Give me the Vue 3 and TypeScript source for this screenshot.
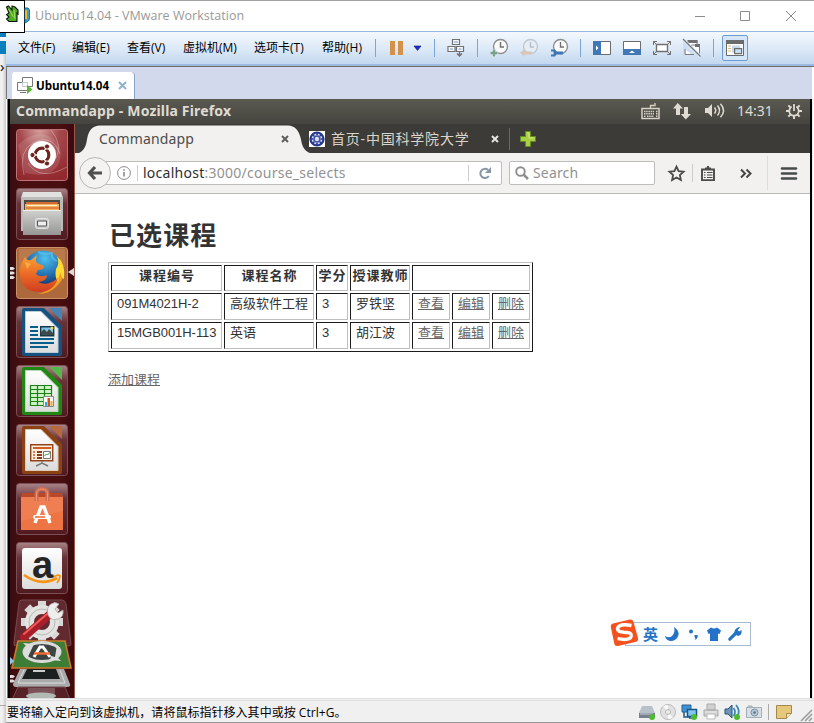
<script setup lang="ts">
interface Course {
  code: string
  name: string
  credit: number
  teacher: string
}

const menus: string[] = ['文件(F)', '编辑(E)', '查看(V)', '虚拟机(M)', '选项卡(T)', '帮助(H)']
const heads: string[] = ['课程编号', '课程名称', '学分', '授课教师']
const actions: string[] = ['查看', '编辑', '删除']
const courses: Course[] = [
  { code: '091M4021H-2', name: '高级软件工程', credit: 3, teacher: '罗铁坚' },
  { code: '15MGB001H-113', name: '英语', credit: 3, teacher: '胡江波' },
]
const teeth: number[] = [0, 45, 90, 135, 180, 225, 270, 315]
</script>

<template>
  <div class="desktop">
    <div class="behind">
      <i class="blue a"></i><i class="blue b"></i><span class="chev">›</span><i class="line"></i>
    </div>
    <div class="window">
      <header class="titlebar">
        <span class="title">Ubuntu14.04 - VMware Workstation</span>
        <svg class="winctl" width="100" height="12" viewBox="0 0 100 12" fill="none" stroke="#8c8c8c">
          <path d="M0 6.500h10M45.500 1.500h9v9h-9zM91 1l10 10M101 1l-10 10" />
        </svg>
      </header>

      <div class="toolbar">
        <nav class="menus"><span v-for="m in menus" :key="m">{{ m }}</span></nav>
        <div class="tools">
          <i class="sep"></i>
          <svg class="pause" width="14" height="14"><path d="M0 0h5v14H0zM8 0h5v14H8z" fill="#d4914a" /></svg>
          <svg class="caret" width="8" height="5"><path d="M0 0h7L3.500 4.500z" fill="#1a2ae0" stroke="#111a66" stroke-width=".6" /></svg>
          <i class="sep"></i>
          <svg width="18" height="20" fill="#f7fafd" stroke="#707070" stroke-width="1.2">
            <path d="M5.500 1.500h7v5h-7zM1 8.500h7v5H1zM9.500 8.500h7v5h-7z" />
            <path d="M7 4h4M3 11h3M11.500 11h3" stroke="#b4cae2" stroke-width="2" />
            <path d="M12.500 14v4M10 15.500l2.500 2.500L15 15.500" fill="none" stroke-width="1.4" />
          </svg>
          <i class="sep"></i>
          <svg width="18" height="20" fill="none">
            <circle cx="10.500" cy="8.500" r="7" fill="#fafafa" stroke="#8c8c8c" stroke-width="1.4" />
            <path d="M10.500 4v5H14" stroke="#707070" stroke-width="1.4" />
            <path d="M4 11v8M0 15h8" stroke="#e0ebf6" stroke-width="4" /><path d="M4 11.500v7M.5 15h7" stroke="#79a08c" stroke-width="2.400" />
          </svg>
          <svg width="18" height="20" fill="none">
            <circle cx="10.500" cy="8.500" r="7" fill="#e6edf5" stroke="#bfc8d1" stroke-width="1.4" />
            <path d="M10.500 4v5H14" stroke="#b5bec8" stroke-width="1.4" />
            <path d="M0 15l4.500-4v2.500H12v3H4.500V19z" fill="#d8c6b8" />
          </svg>
          <svg width="18" height="20" fill="none">
            <circle cx="10.500" cy="8.500" r="7" fill="#fafafa" stroke="#8c8c8c" stroke-width="1.4" />
            <path d="M10.500 4v5H14" stroke="#707070" stroke-width="1.4" />
            <path d="M1 11.500h4l1.500 2H13v3H6.500l-1.500 2H1v-2h2.500v-3H1z" fill="#3f77b2" />
          </svg>
          <i class="sep"></i>
          <svg width="18" height="14"><path d="M.5.500h17v13H.5z" fill="#fff" stroke="#6b6b6b" /><path d="M0 0h8v14H0z" fill="#4177b4" /><path d="M3 4.500L5.500 7 3 9.500z" fill="#fff" /></svg>
          <svg width="18" height="14"><path d="M.5.500h17v13H.5z" fill="#fff" stroke="#6b6b6b" /><path d="M0 8h18v6H0z" fill="#4177b4" /><path d="M6 12h6L9 9.500z" fill="#fff" /></svg>
          <svg width="18" height="14" fill="none" stroke="#707070"><path d="M3.500 3.500h11v7h-11z" fill="#fff" stroke-width="1.4" /><path d="M.5 4V.5H4M.5.5l3 3M14 .5h3.500V4M17.500.5l-3 3M.5 10v3.500H4M.5 13.500l3-3M14 13.500h3.500V10M17.500 13.500l-3-3" /></svg>
          <svg width="18" height="18">
            <path d="M5 1.500h9v8H5z" fill="#fff" stroke="#7c7c7c" /><path d="M4.500 1h10v3h-10z" fill="#707070" />
            <path d="M8.500 6h8v9h-8z" fill="#fff" stroke="#7c7c7c" /><path d="M12 5h5v3h-5z" fill="#707070" />
            <path d="M1.500 8h8v8h-8z" fill="#fff" stroke="#7c7c7c" />
            <path d="M0 1.500L16 18H0z" fill="#cfdff1" /><path d="M2 10v5.500h9" fill="none" stroke="#7c7c7c" /><path d="M3 11v4h5z" fill="#fff" />
            <path d="M0 0l17.500 17.500" stroke="#e9f1f9" stroke-width="3" /><path d="M0 0l17.500 17.500" stroke="#6f7880" stroke-width="1.2" />
          </svg>
          <i class="sep"></i>
          <span class="pressed">
            <svg width="18" height="16"><path d="M.5.500h17v15H.5z" fill="#fff" stroke="#6b6b6b" /><path d="M0 0h18v4H0z" fill="#6b6b6b" /><path d="M2 6h3M2 8.500h3M2 11h3" stroke="#e0bb72" stroke-width="1.2" /><path d="M6 5.500h8v7H6z" fill="#c4d8ec" /><path d="M8.600 8.600h7v5h-7z" fill="#c9dff4" stroke="#6b6b6b" stroke-width="1.2" /></svg>
          </span>
        </div>
      </div>

      <div class="vmtabs">
        <div class="vmtab">
          <svg width="17" height="17" fill="#fff" stroke="#777"><path d="M5.500.500h10v9h-10z" /><path d="M.5 5.500h10v8H.5zM3 15.500h6" /><path d="M5.500 5.500h5v4h-5z" stroke="#c3cad3" /><path d="M10 8l5.500 4.500L10 17z" fill="#58b832" stroke="none" /></svg>
          <b>Ubuntu14.04</b>
          <svg class="x" width="9" height="9"><path d="M1 1l7 7M8 1L1 8" stroke="#8eb2ce" stroke-width="2" /></svg>
        </div>
      </div>

      <div class="guest">
        <div class="panel">
          <b>Commandapp - Mozilla Firefox</b>
          <svg width="19" height="18" fill="none" stroke="#d7d2c8"><path d="M9.500 6V3.500H14V1" stroke-width="1.3" /><path d="M1 6.500h17v10H1z" stroke-width="1.5" /><path d="M3 9.500h10M15 9.500h2M3 11.800h10M15 11.800h2M3 14.200h2M6 14.200h7M15 14.200h2" stroke-width="1.500" stroke-dasharray="1.5 .7" /></svg>
          <svg class="net" width="19" height="17" fill="#dfdbd2"><path d="M4.800 0L0 5.500h3V12h4V5.500h3zM12.800 16.500l-5-5.500H11V4h4v7h3z" /></svg>
          <svg class="vol" width="20" height="16" fill="none" stroke="#dfdbd2"><path d="M0 5h3l4-4v13l-4-4H0z" fill="#dfdbd2" stroke="none" /><path d="M9.500 4.500q2.500 3 0 6" stroke-width="1.5" /><path d="M12.500 2.500q4 5 0 10" stroke-width="1.5" /><path d="M15.500.7q6 6.800 0 13.600" stroke-width="1.5" /></svg>
          <span class="time">14:31</span>
          <svg class="gear" width="16" height="16" viewBox="0 0 18 18"><circle cx="9" cy="9" r="5.300" fill="none" stroke="#dfdbd2" stroke-width="2" /><path v-for="t in teeth" :key="t" d="M9 0v4" :transform="`rotate(${t} 9 9)`" stroke="#dfdbd2" stroke-width="2.200" /><path d="M9 0v9" stroke="#504f48" stroke-width="5" /><path d="M9 1v8" stroke="#dfdbd2" stroke-width="2" /></svg>
        </div>
        <div class="session">
          <aside class="launcher">
            <svg class="tile" viewBox="0 0 52 52">
              <defs>
                <radialGradient id="dash" cx=".45" cy="0" r="1"><stop offset="0" stop-color="#d5a09e" /><stop offset=".4" stop-color="#a5484c" /><stop offset="1" stop-color="#92292f" /></radialGradient>
                <linearGradient id="gloss" x2="0" y2="1"><stop offset="0" stop-color="#a98488" /><stop offset=".3" stop-color="#683238" /><stop offset="1" stop-color="#501a20" /></linearGradient>
                <linearGradient id="metal" x2="0" y2="1"><stop offset="0" stop-color="#d0d0ce" /><stop offset="1" stop-color="#969694" /></linearGradient>
                <linearGradient id="sheet" x2="0" y2="1"><stop offset="0" stop-color="#fff" /><stop offset="1" stop-color="#dcdcdc" /></linearGradient>
                <radialGradient id="globe" cx=".55" cy=".2" r=".8"><stop offset="0" stop-color="#4ec2ed" /><stop offset=".5" stop-color="#2577b8" /><stop offset="1" stop-color="#0c2358" /></radialGradient>
                <linearGradient id="fox" x2="0" y2="1"><stop offset="0" stop-color="#f6a438" /><stop offset=".5" stop-color="#ec6b25" /><stop offset="1" stop-color="#d03e22" /></linearGradient>
              </defs>
              <rect x=".5" y=".5" width="51" height="51" rx="3" fill="url(#dash)" stroke="#bb7478" />
              <path d="M2 16Q20-2 38 10q10 9 5 24Q36 50 9 44" fill="#fff" opacity=".13" />
              <path d="M8 46Q2 22 17 14q19-10 27 11M51 38Q24 53 12 34M35 1q12 15 5 28" fill="none" stroke="#fff" opacity=".3" />
              <circle cx="26" cy="26" r="14" fill="#fff" />
              <circle cx="26" cy="26" r="6.800" fill="none" stroke="#6f231d" stroke-width="3.200" />
              <path d="M26 26h-9M26 26l5-9M26 26l5 9" stroke="#fff" stroke-width="1.3" />
              <circle cx="26" cy="26" r="5.200" fill="#fff" />
              <g fill="#6f231d" stroke="#fff"><circle cx="16.500" cy="26" r="2.600" /><circle cx="31" cy="17.500" r="2.600" /><circle cx="31" cy="34.500" r="2.600" /></g>
            </svg>
            <svg class="tile" viewBox="0 0 52 52">
              <rect x=".5" y=".5" width="51" height="51" rx="3" fill="url(#gloss)" stroke="#795055" />
              <path d="M7 4h38l2 5v34H5V9z" fill="#bbbcba" /><path d="M7 4h38l1 5H6z" fill="#e1e1df" />
              <path d="M8 12h36v10H8z" fill="#4b4b46" /><path d="M10 14h32v8H9z" fill="#cf6a35" /><path d="M9 16h34v6H9z" fill="#f0b05b" /><path d="M11 17.500h30" stroke="#fff2cb" /><path d="M10 20h33" stroke="#df733b" stroke-width="1.4" />
              <path d="M7 22h38v25H7z" fill="url(#metal)" /><path d="M7 22.500h38" stroke="#eee" />
              <rect x="19.500" y="30.500" width="13" height="10" rx="2" fill="#ccc" stroke="#e3e3e3" /><path d="M21.500 33h9v5h-9z" fill="#eee" stroke="#555" />
            </svg>
            <div class="slot">
              <svg class="tile" viewBox="0 0 52 52">
                <rect x=".5" y=".5" width="51" height="51" rx="3" fill="#ad683c" stroke="#c99167" />
                <path d="M3 2h46v18Q25 16 3 25z" fill="#d9a078" opacity=".3" />
                <circle cx="27" cy="23" r="19.500" fill="url(#globe)" />
                <path d="M22 5q6 3 14 1-1 6 5 8" fill="none" stroke="#6ad0ef" stroke-width="2" opacity=".5" />
                <path d="M44 12q9 15-2 26-8 9-20 9 15-4 18-14l2-8z" fill="#f39b24" />
                <path d="M41 9q9 9 7 23-4-2-3-7-4 7-2 10-5-4-3-13 4-5 1-13z" fill="#ffda32" />
                <path d="M9 10q2 4 6 3l6-5q-2 5 0 8l7 3q0 4-6 4l-2 4q4 4 11 1 0 6-9 7 9 5 20-4-4 13-17 14-18 1-21-16-1-10 5-19z" fill="url(#fox)" />
                <path d="M9 15l6 2-4 5z" fill="#ffc24f" opacity=".6" />
              </svg>
              <svg class="pips" width="6" height="14"><path d="M0 1h3l2 1.500L3 4H0zM0 5.500h3L5 7 3 8.500H0zM0 10h3l2 1.500L3 13H0z" fill="#e2e0e0" /></svg>
              <svg class="focus" width="6" height="8"><path d="M6 0v8L0 4z" fill="#dedada" /></svg>
            </div>
            <svg class="tile" viewBox="0 0 52 52">
              <rect x=".5" y=".5" width="51" height="51" rx="3" fill="url(#gloss)" stroke="#795055" />
              <path d="M8 2h20l18 18v28q0 2-2 2H8q-2 0-2-2V4q0-2 2-2z" fill="#15527f" /><path d="M33 2h13v13z" fill="#4784b0" />
              <path d="M9.500 5.500H25l17 17v24H9.500z" fill="url(#sheet)" stroke="#b9ccd8" />
              <path d="M14 21h8M14 25h8M14 29h8M14 33h24M14 37h24M14 41h18" stroke="#075d8c" stroke-width="2" />
              <path d="M24.700 20.700h13v9h-13z" fill="#7fc4eb" stroke="#17384b" stroke-width="1.400" /><path d="M25 29v-3l3-3 3 3 2-3 4 4v2z" fill="#414948" /><circle cx="36" cy="22" r="1.500" fill="#ffd53b" />
            </svg>
            <svg class="tile" viewBox="0 0 52 52">
              <rect x=".5" y=".5" width="51" height="51" rx="3" fill="url(#gloss)" stroke="#795055" />
              <path d="M8 2h20l18 18v28q0 2-2 2H8q-2 0-2-2V4q0-2 2-2z" fill="#208715" /><path d="M33 2h13v13z" fill="#58b64c" />
              <path d="M9.500 5.500H25l17 17v24H9.500z" fill="url(#sheet)" stroke="#b9d8b6" />
              <path d="M14.500 20.500h21v20h-21zM14.500 24.500h21M14.500 28.500h21M14.500 32.500h21M14.500 36.500h21M21.500 20v21M28.500 20v21" fill="#d1f1c7" stroke="#188314" stroke-width="1.200" />
              <path d="M27.500 31.500h10v10h-10z" fill="#fff" stroke="#888" /><path d="M29 37h2v4h-2z" fill="#27aed6" /><path d="M31.500 33H34v8h-2.500z" fill="#da4c15" /><path d="M34.500 36h2v5h-2z" fill="#ebaa31" />
            </svg>
            <svg class="tile" viewBox="0 0 52 52">
              <rect x=".5" y=".5" width="51" height="51" rx="3" fill="url(#gloss)" stroke="#795055" />
              <path d="M8 2h20l18 18v28q0 2-2 2H8q-2 0-2-2V4q0-2 2-2z" fill="#8c4313" /><path d="M33 2h13v13z" fill="#b9693f" />
              <path d="M9.500 5.500H25l17 17v24H9.500z" fill="url(#sheet)" stroke="#ddc7b7" />
              <path d="M14.700 20.700h22v16h-22z" fill="#fff0e4" stroke="#914216" stroke-width="1.400" /><path d="M17 24h18" stroke="#d45e20" stroke-width="2" /><path d="M17 28h2M17 31h2M17 34h2" stroke="#e47d4a" stroke-width="2" /><path d="M21 28h5M21 31h5M21 34h5" stroke="#883d1d" stroke-width="2" />
              <path d="M27.500 27.500h7v7h-7z" fill="#fff" stroke="#777" /><path d="M28.500 32l2-2 1 1 3-3" fill="none" stroke="#2a9238" /><path d="M26 37v2M20 42l6-3 6 3" fill="none" stroke="#777" stroke-width="1.500" />
            </svg>
            <svg class="tile" viewBox="0 0 52 52">
              <rect x=".5" y=".5" width="51" height="51" rx="3" fill="url(#gloss)" stroke="#795055" />
              <path d="M7 10h38l2 4v33H5V14z" fill="#ed7544" /><path d="M5 14h42L45 10H7z" fill="#b94828" /><path d="M5 14h42v14L5 38z" fill="#ef8258" opacity=".7" />
              <path d="M20.500 18v-7q0-5 5.500-5t5.500 5v7" fill="none" stroke="#d06d51" stroke-width="4" /><path d="M20.500 18v-7q0-5 5.500-5t5.500 5v7" fill="none" stroke="#ec9474" />
              <path d="M19 40l6-16h3l6 16" fill="none" stroke="#fff" stroke-width="3.500" /><rect x="17" y="32" width="18" height="4" rx="2" fill="#fff" /><path d="M19 34h10" stroke="#eb672f" stroke-width="1.500" />
            </svg>
            <div class="slot">
              <svg class="tile" viewBox="0 0 52 52">
                <rect x=".5" y=".5" width="51" height="51" rx="3" fill="url(#gloss)" stroke="#795055" />
                <rect x="6" y="6" width="40" height="41" rx="3" fill="url(#sheet)" /><path d="M8 33q17 12 33 3" fill="none" stroke="#f79413" stroke-width="2.700" /><path d="M37 35q6-3 7-1 0 3-3 7" fill="none" stroke="#f79413" stroke-width="1.800" />
              </svg>
              <b class="amazon">a</b>
            </div>
            <svg class="pile" width="65" height="104" viewBox="0 0 65 104">
              <path d="M12 2h40q3 0 4 4l5 40q0 2-3 2H6q-3 0-2-4L9 5q0-3 3-3z" fill="#622a30" stroke="#754b50" />
              <g stroke="#d8d9d7" stroke-width="8"><path v-for="t in teeth" :key="t" d="M32 3v9" :transform="`rotate(${t} 32 24)`" /></g>
              <circle cx="32" cy="24" r="12.500" fill="none" stroke="#e3e3e1" stroke-width="9" /><circle cx="32" cy="24" r="13" fill="none" stroke="#b9b9b6" />
              <path d="M14 39l25-22" stroke="#aa1e29" stroke-width="8" stroke-linecap="round" /><path d="M14 36l23-20" stroke="#ed5a58" stroke-width="2" stroke-linecap="round" />
              <path d="M38 17q-2-8 3-11 4-3 8 0l-4 5 3 4 5-3q1 7-5 9-5 2-8-1z" fill="#eee" stroke="#aaa" stroke-width=".8" />
              <path d="M8 43h47l6 27H2z" fill="#3e7d36" stroke="#cc792a" stroke-width="1.600" />
              <ellipse cx="32" cy="54" rx="18" ry="9.500" fill="#3c4340" stroke="#d9d9d9" stroke-width="3" /><path d="M47 47q7 6 0 12l4 4-11-1 1-4 4 1zM17 61q-7-6 0-12l-4-4 11 1" fill="#ddd" />
              <path d="M24 59l6-10h3l7 10" fill="none" stroke="#fff" stroke-width="3" /><path d="M24 55.500h16" stroke="#f26a2d" stroke-width="2.400" />
              <path d="M14 71h36l3 10H10z" fill="#1c1f20" /><path d="M10 71h7l-5 10h38l-4-10h8l6 15q1 3-3 3H6q-3 0-3-3z" fill="#aaa" /><path d="M14 72L8 85h47l-5-13" fill="none" stroke="#ddd" /><path d="M23 73h12" stroke="#ccc" stroke-width="2" />
              <path d="M8 89h47l6 15H1z" fill="#572128" stroke="#754b50" /><path d="M18 90h27v8q-12 5-27 0z" fill="#7c5259" /><ellipse cx="31" cy="98" rx="15" ry="3.500" fill="#b2b9b3" />
              <path d="M0 59l4 4-4 4z" fill="#8ec8e9" /><path d="M0 77h3l2 1.500L3 80H0zM0 81.500h3L5 83l-2 1.500H0z" fill="#e0dada" />
            </svg>
          </aside>

          <main class="firefox">
            <div class="tabs">
              <svg class="shape" width="240" height="30"><path d="M0 29.500q10 0 12-14Q14 1.500 25 1.500h188q10 0 13 14 2 14 13 14z" fill="#f2f1f0" /></svg>
              <span class="tab one">Commandapp</span>
              <svg width="8" height="8"><path d="M1 1l6 6M7 1L1 7" stroke="#5d5d5b" stroke-width="2" /></svg>
              <svg class="fav" width="16" height="16"><path d="M0 0h16v16H0z" fill="#fff" /><circle cx="8" cy="8" r="6.500" fill="#d9def4" stroke="#26388e" stroke-width="2.200" /><circle cx="8" cy="8" r="3" fill="none" stroke="#3f51a4" stroke-width="1.600" /><path v-for="t in teeth" :key="t" d="M8 4V2" :transform="`rotate(${t} 8 8)`" stroke="#26388e" stroke-width="1.600" /></svg>
              <span class="tab two">首页-中国科学院大学</span>
              <svg width="8" height="8"><path d="M1 1l6 6M7 1L1 7" stroke="#e6e5e2" stroke-width="2" /></svg>
              <i class="tsep"></i>
              <svg width="16" height="16"><path d="M5.500.500h5v5h5v5h-5v5h-5v-5h-5v-5h5z" fill="#a9cf45" stroke="#648d20" /><path d="M7 2h2v5h5" fill="none" stroke="#cfea7e" /></svg>
            </div>
            <div class="nav">
              <span class="back"><svg width="14" height="14"><path d="M7 1L1.500 7 7 13M2 7h12" fill="none" stroke="#50504e" stroke-width="3.200" /></svg></span>
              <div class="url">
                <svg width="14" height="14" fill="none" stroke="#8a8a8a"><circle cx="7" cy="7" r="6.400" /><path d="M7 6v4.500M7 3.300v1.500" stroke-width="1.600" /></svg>
                <i></i><span><em>localhost</em>:3000/course_selects</span><i class="r"></i>
                <svg width="13" height="13"><path d="M9.800 9A4.600 4.600 0 1 1 9 3" fill="none" stroke="#8795a3" stroke-width="2" /><path d="M12 0v6H6z" fill="#8795a3" /></svg>
              </div>
              <div class="search">
                <svg width="14" height="14" fill="none" stroke="#8e8e8c"><circle cx="5.500" cy="5.500" r="4.300" stroke-width="1.900" /><path d="M8.500 8.500L13 13" stroke-width="2.500" /></svg>
                <span>Search</span>
              </div>
              <svg class="star" width="17" height="17"><path d="M8.500 1.600l2.100 4.500 5 .6-3.700 3.400 1 4.900-4.400-2.500L4.100 15l1-4.900L1.400 6.700l5-.6z" fill="none" stroke="#4a4a48" stroke-width="1.800" /></svg>
              <i class="nsep"></i>
              <svg width="14" height="15"><path d="M1 3.500h12v10.600H1z" fill="none" stroke="#4a4a48" stroke-width="1.900" /><path d="M4 3V1.500h2V0h2v1.500h2V3z" fill="#4a4a48" /><path d="M3 6.500h1.500M6 6.500h5.500M3 9h1.500M6 9h5.500M3 11.500h1.500M6 11.500h5.500" stroke="#4a4a48" stroke-width="1.200" /></svg>
              <svg class="more" width="12" height="9"><path d="M1 .5l4 4-4 4M6.500.5l4 4-4 4" fill="none" stroke="#454543" stroke-width="2" /></svg>
              <i class="nsep tall"></i>
              <svg class="burger" width="16" height="13"><path d="M1 1.500h14M1 6.500h14M1 11.500h14" stroke="#454c49" stroke-width="2.600" stroke-linecap="round" /></svg>
            </div>
            <div class="page">
              <h1>已选课程</h1>
              <table>
                <colgroup><col class="c1" /><col class="c2" /><col class="c3" /><col class="c4" /><col class="c5" /><col class="c5" /><col class="c5" /></colgroup>
                <thead><tr><th v-for="h in heads" :key="h">{{ h }}</th><th colspan="3"></th></tr></thead>
                <tbody>
                  <tr v-for="c in courses" :key="c.code">
                    <td class="code">{{ c.code }}</td><td>{{ c.name }}</td><td>{{ c.credit }}</td><td>{{ c.teacher }}</td>
                    <td v-for="a in actions" :key="a"><a>{{ a }}</a></td>
                  </tr>
                </tbody>
              </table>
              <a class="add">添加课程</a>
            </div>
          </main>
        </div>
      </div>

      <footer class="status">
        <span>要将输入定向到该虚拟机，请将鼠标指针移入其中或按 Ctrl+G。</span>
        <svg width="16" height="16"><path d="M3 2h10l3 7H0z" fill="#b8c0ca" /><path d="M0 9h16v5H0z" fill="#76808e" /><path d="M1 10h13" stroke="#cbd2da" /><circle cx="13" cy="13" r="3" fill="#4dbb30" /></svg>
        <svg width="16" height="16"><circle cx="8" cy="8" r="7.500" fill="#e1e1e1" stroke="#bbb" /><path d="M8 8L3 2l5-1zM8 8l5 6-5 1z" fill="#fafafa" /><circle cx="8" cy="8" r="2.500" fill="#eee" stroke="#b7b7b7" /></svg>
        <svg width="17" height="16"><path d="M1 1h9v7H1z" fill="#3f91d5" stroke="#276090" /><path d="M6.500 5.500h9v7h-9z" fill="#83c6f2" stroke="#175587" stroke-width="1.500" /><path d="M3 8v5h6M8 14h6" fill="none" stroke="#215a84" stroke-width="1.500" /><circle cx="13" cy="13" r="3" fill="#4dbb30" /></svg>
        <svg width="16" height="16"><path d="M4 0h8v6H4zM1 6h14v6H1z" fill="#d0d0d0" stroke="#aaa" /><path d="M4 10h8v5H4z" fill="#fff" stroke="#bbb" /><path d="M2 8h12" stroke="#eee" /></svg>
        <svg width="17" height="16"><path d="M1 5h3l4-4v13l-4-4H1z" fill="#7097b7" stroke="#234f78" /><path d="M9.500 4q3 4 0 8M12 1q5 6 1 12" fill="none" stroke="#3a86be" stroke-width="1.800" /><circle cx="13" cy="13" r="3" fill="#4dbb30" /></svg>
        <svg width="16" height="14"><path d="M.5 2.500h15v10H.5zM2 1h4v1H2z" fill="#d8e0e7" stroke="#a4aeb7" /><circle cx="8.500" cy="7.500" r="3.500" fill="#b9cad8" stroke="#7e909f" /><circle cx="8.500" cy="7.500" r="1.200" fill="#576c7e" /></svg>
        <i></i>
        <svg width="16" height="14"><path d="M.5.500h15v8l-5 5H.5z" fill="#e5c87a" stroke="#a08a51" /><path d="M10.500 13.500v-5h5" fill="#f7e6b0" stroke="#a08a51" /></svg>
        <svg class="grip" width="11" height="11"><path d="M0 11L11 0M4 11l7-7M8 11l3-3" stroke="#999" stroke-width="1.500" /></svg>
      </footer>
    </div>

    <div class="corner">
      <svg width="15" height="19"><path d="M1.500 2l2-1L7 5V1l3 1 3 3v4l-1-1v8.500H4L1.500 14 4 12 1.500 9.500 4 8z" fill="#4dad25" stroke="#111" stroke-width="1.100" /><path d="M3.500 4l5 8M9 5l1 9" stroke="#a1e260" /></svg>
    </div>
    <svg class="peek" width="5" height="17"><path d="M0 1h3q1.500 1 1.500 3v8q0 2-4.500 4z" fill="#3fa0c8" stroke="#256f96" /><path d="M0 3h2v9H0z" fill="#f3b72c" /></svg>
    <div class="ime">
      <span>英</span>
      <svg width="14" height="14"><path d="M9 0q5 3 4.500 8-2 6-8 6Q1 13.500 0 9q4 2.500 7 0 3.500-3 2-9z" fill="#2472c8" /></svg>
      <svg class="punct" width="11" height="14"><circle cx="3" cy="4.500" r="2" fill="#2472c8" /><path d="M6.500 8h3q1 3-2.500 5 1-2-.5-3z" fill="#2472c8" /></svg>
      <svg width="14" height="14"><path d="M4 .5q3 2 6 0l4 3-1.500 3.500L11 6.500V14H3V6.500L1.500 7 0 3.500z" fill="#2472c8" /></svg>
      <svg width="14" height="14"><path d="M1.800 12.200L8 6" stroke="#2472c8" stroke-width="3.200" stroke-linecap="round" /><path d="M6.500 7q-1-5 4.500-7l1 .5L9.700 3l1.300 1.500L13.500 3q1 5-3.500 6z" fill="#2472c8" /></svg>
      <svg class="sogou" width="29" height="28" viewBox="0 0 29 28"><path d="M3 4.500L20 .6q3-.5 3.500 2.500L28 19q.5 3-2 3.700L8 27q-3 .5-3.600-2L.8 8Q.5 5 3 4.500z" fill="#f4511e" /><path d="M21.500 6.500Q9 4 7.500 9.500q0 3.500 6.500 3.700 7.500 0 7.200 3.500-.7 5.500-13.700 3" fill="none" stroke="#fff" stroke-width="3.400" /></svg>
    </div>
  </div>
</template>

<style>
body { margin: 0; overflow: hidden; }
</style>
<style scoped>
.desktop { position: relative; display: flex; width: 814px; height: 723px; overflow: hidden; background: #fff; font-family: "Open Sans", "Noto Sans CJK SC", sans-serif; }
svg { display: block; flex: none; overflow: visible; }
i { display: block; flex: none; font-style: normal; }
span, b { white-space: nowrap; }

.behind { flex: none; width: 6px; box-sizing: border-box; padding-top: 33px; background: linear-gradient(90deg, #f0f0f0 40%, #c9c9c9); }
.blue { background: #0c7dbd; height: 13px; }
.blue.a { height: 4px; border-bottom: 4px solid #f4f4f4; }
.chev { display: block; font: 15px/18px "Open Sans"; height: 651px; padding-top: 3px; box-sizing: border-box; }
.behind .line { height: 1px; background: #aaa; }

.window { flex: 1; min-width: 0; display: flex; flex-direction: column; }
.titlebar { box-sizing: border-box; height: 32px; border-top: 1px solid #a3a3a3; border-bottom: 1px solid #97b9de; display: flex; align-items: center; justify-content: space-between; padding: 0 19px 1px 29px; }
.title { font-size: 12.500px; letter-spacing: .03px; color: #999; }

.toolbar { box-sizing: border-box; height: 35px; width: 808px; flex: none; display: flex; align-items: center; background: linear-gradient(#f4f8fd, #dce9f7 50%, #c0d5ee); border-bottom: 1px solid #6f6c68; box-shadow: inset 0 -2px #9cbadf; padding-left: 12px; }
.menus { display: grid; grid-template-columns: 54px 55px 56px 71px 68px 53px; font: 12px/18px "Open Sans", "Noto Sans CJK SC", sans-serif; color: #000; padding-bottom: 3px; }
.tools { display: flex; align-items: center; gap: 12px; padding-bottom: 2px; height: 32px; }
.sep { width: 1px; height: 18px; background: #7ba5d2; }
.pause { margin-left: 2px; }
.caret { margin-left: -2px; }
.pressed { width: 26px; height: 26px; box-sizing: border-box; border: 1px solid #6e9bd0; border-radius: 2px; background: #d5e6f9; display: grid; place-items: center; margin-left: -4px; }

.vmtabs { height: 32px; width: 806px; box-sizing: border-box; flex: none; background: #d3d9ec; padding: 5px 0 0 5px; border-left: 1px solid #777; }
.vmtab { width: 123px; height: 27px; box-sizing: border-box; background: #fff; border-right: 1px solid #85a5c6; border-radius: 3px 4px 0 0; display: flex; align-items: center; padding-left: 5px; }
.vmtab b { font-size: 11.600px; letter-spacing: -.08px; margin: 0 0 0 2px; width: 82px; }

.guest { height: 599px; flex: none; box-sizing: border-box; width: 806px; margin-left: 1px; border-left: 1px solid #777; padding-left: 2px; background: linear-gradient(90deg, #000 2px, transparent 2px, transparent 802px, #000 802px, #000 804px, #eee 804px); }
.panel { width: 800px; height: 25px; box-sizing: border-box; background: linear-gradient(#5b5a51, #45443f); color: #dfdbd2; display: flex; align-items: center; padding: 0 0 1px 6px; }
.panel b { font: bold 14px/20px "Noto Sans", sans-serif; width: 625px; letter-spacing: .16px; }
.net { margin-left: 13px; }
.vol { margin-left: 13px; }
.time { font: 14px/20px "Noto Sans", sans-serif; width: 37px; margin-left: 12px; }
.gear { margin-left: 12px; }
.session { display: flex; height: 574px; width: 800px; }
.launcher { flex: none; width: 65px; box-sizing: border-box; padding: 5px 0 0 6px; background: linear-gradient(90deg, #390d10, #480e10 20%, #480e10 80%, #3a0b0d); border-right: 1px solid #9c5748; display: flex; flex-direction: column; gap: 7px; overflow: hidden; }
.tile { width: 52px; height: 52px; }
.slot { position: relative; width: 52px; height: 52px; flex: none; }
.pips { position: absolute; left: -6px; top: 19px; }
.focus { position: absolute; right: -6px; top: 21px; }
.amazon { position: absolute; left: 16px; top: 3px; font: bold 38px/40px "Liberation Sans", sans-serif; color: #252525; }
.pile { margin: -3px 0 0 -6px; }

.firefox { flex: 1; min-width: 0; background: #fff; }
.tabs { position: relative; height: 29px; background: #3c3b37; display: flex; align-items: center; padding-left: 24px; box-sizing: border-box; }
.shape { position: absolute; left: 0; top: 0; }
.tab { position: relative; font: 14px/20px "Noto Sans", "Noto Sans CJK SC", sans-serif; color: #4c4c4c; width: 182px; letter-spacing: .12px; }
.tab.two { color: #d8d4cb; width: 160px; margin-left: 6px; letter-spacing: .8px; }
.tabs svg:not(.shape) { position: relative; }
.fav { margin-left: 20px; }
.tsep { width: 1px; height: 22px; background: #6b6a66; margin: 0 10px; }
.nav { height: 41px; box-sizing: border-box; border-bottom: 1px solid #bcbab8; background: #f2f1f0; display: flex; align-items: center; padding-left: 4px; }
.back { position: relative; z-index: 1; box-sizing: border-box; width: 32px; height: 32px; border: 1px solid #b8b6b4; border-radius: 50%; background: #f4f3f2; display: grid; place-items: center; flex: none; }
.url, .search { box-sizing: border-box; height: 24px; background: #fff; border: 1px solid #bfbdbb; border-radius: 2px; display: flex; align-items: center; font: 14px/20px "Noto Sans", sans-serif; color: #929292; }
.url { width: 407px; margin-left: -16px; padding-left: 21px; }
.url em { font-style: normal; color: #2e2e2e; }
.url i { width: 1px; height: 16px; background: #ccc; margin: 0 5px 0 6px; }
.url span { width: 325px; letter-spacing: .26px; }
.url i.r { margin: 0 10px 0 0; }
.search { width: 146px; margin-left: 7px; padding-left: 5px; letter-spacing: .15px; }
.search span { margin-left: 4px; }
.star { margin-left: 13px; }
.nsep { width: 1px; height: 18px; background: #ccc; margin: 0 8px 0 7px; }
.more { margin-left: 25px; }
.nsep.tall { height: 34px; background: #dedddb; margin: 0 13px 0 15px; }

.page { padding: 22px 0 0 33px; font: 13px/18px "Liberation Sans", "Noto Sans CJK SC", sans-serif; color: #333; }
h1 { margin: 0; height: 46px; font-size: 26px; line-height: 40px; letter-spacing: 1.1px; padding-left: 1px; }
table { table-layout: fixed; width: 425px; height: 90px; box-sizing: border-box; border-collapse: separate; border-spacing: 2px; border: 1px solid; border-color: #bfbfbf #1c1c1c #1c1c1c #bfbfbf; }
.c1 { width: 111px; } .c2 { width: 90px; } .c3 { width: 32px; } .c4 { width: 60px; } .c5 { width: 38px; }
th, td { box-sizing: border-box; height: 27px; padding: 1px 0 0; vertical-align: top; border: 1px solid; border-color: #1c1c1c #bfbfbf #bfbfbf #1c1c1c; white-space: nowrap; line-height: 18px; }
th { height: 26px; letter-spacing: 1px; padding: 1px 0 0 1px; }
td { padding-left: 5px; }
.code { letter-spacing: -.06px; }
a { color: #666; text-decoration: underline; }
.add { display: inline-block; margin-top: 19px; }

.status { box-sizing: border-box; height: 25px; flex: none; border-top: 3px double #dedede; border-bottom: 1px solid #999; background: #f0f0f0; display: flex; align-items: center; font-size: 12px; color: #000; gap: 5px; padding-left: 1px; }
.status span { width: 627px; line-height: 18px; letter-spacing: .03px; padding-top: 2px; }
.status i { width: 1px; height: 16px; background: #aaa; margin: 0 2px 0 1px; }
.grip { margin: 7px 0 0 4px; }

.corner { position: absolute; left: -1px; top: 0; width: 26px; height: 33px; box-sizing: border-box; border: 1px solid #000; background: #fff; padding: 4px 0 0 5px; }
.peek { position: absolute; left: 25px; top: 7px; }
.ime { position: absolute; left: 625px; top: 622px; width: 126px; height: 24px; box-sizing: border-box; border: 1px solid #a9bdd2; background: #fcfdff; display: flex; align-items: center; padding-left: 17px; gap: 7px; color: #2472c8; }
.ime span { font: bold 15px/20px "Noto Sans CJK SC", sans-serif; }
.punct { margin: 0 1px 0 2px; }
.sogou { position: absolute; left: -16px; top: -4px; }
</style>
